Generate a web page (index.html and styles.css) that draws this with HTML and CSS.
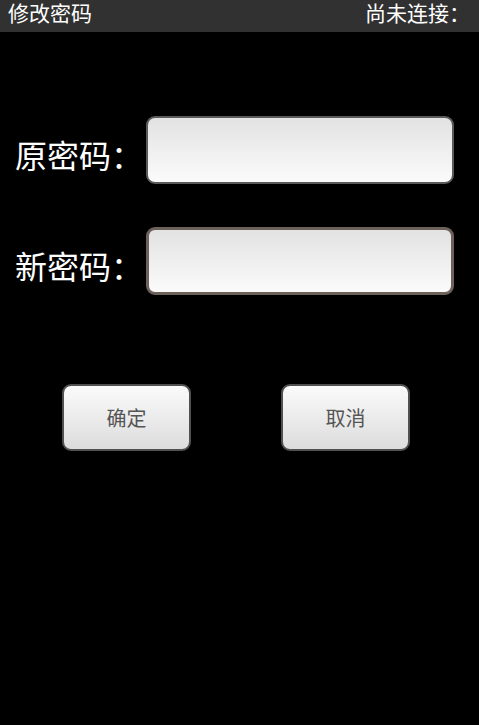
FILE: index.html
```html
<!DOCTYPE html>
<html>
<head>
<meta charset="utf-8">
<link rel="stylesheet" href="styles.css">
</head>
<body>
<div class="titlebar">
  <span class="title">修改密码</span>
  <span class="status">尚未连接：</span>
</div>
<div class="form">
  <div class="row">
    <span class="label">原密码：</span>
    <div class="field"></div>
  </div>
  <div class="row">
    <span class="label">新密码：</span>
    <div class="field focused"></div>
  </div>
  <div class="buttons">
    <div class="btn">确定</div>
    <div class="btn">取消</div>
  </div>
</div>
</body>
</html>
```
FILE: styles.css
```css
html, body {
  margin: 0;
  padding: 0;
  background: #000;
}
body {
  width: 479px;
  height: 725px;
  font-family: "Noto Sans CJK SC", "Noto Sans", sans-serif;
  color: #fff;
  overflow: hidden;
}
.titlebar {
  height: 32px;
  box-sizing: border-box;
  background: #313131;
  display: flex;
  justify-content: space-between;
  align-items: flex-start;
  padding: 0 9px 0 8px;
  font-size: 21px;
  line-height: 25px;
}
.form {
  padding-top: 84px;
  display: flex;
  flex-direction: column;
  gap: 43px;
}
.row {
  display: flex;
  align-items: center;
  height: 68px;
}
.label {
  flex: 0 0 146px;
  box-sizing: border-box;
  padding-left: 15px;
  font-size: 32px;
  line-height: 1;
  padding-top: 8px;
  white-space: nowrap;
}
.field {
  width: 308px;
  height: 68px;
  box-sizing: border-box;
  border: 2px solid #5a5a5a;
  border-radius: 9px;
  background: linear-gradient(#e2e2e2, #fbfbfb);
}
.field.focused {
  border: 3px solid #6d615c;
}
.buttons {
  display: flex;
  gap: 90px;
  padding-left: 62px;
  margin-top: 46px;
}
.btn {
  width: 129px;
  height: 67px;
  box-sizing: border-box;
  border: 2px solid #505050;
  border-radius: 9px;
  background: linear-gradient(#fbfbfb, #dcdcdc);
  color: #555;
  font-size: 20px;
  display: flex;
  align-items: center;
  justify-content: center;
}
```
